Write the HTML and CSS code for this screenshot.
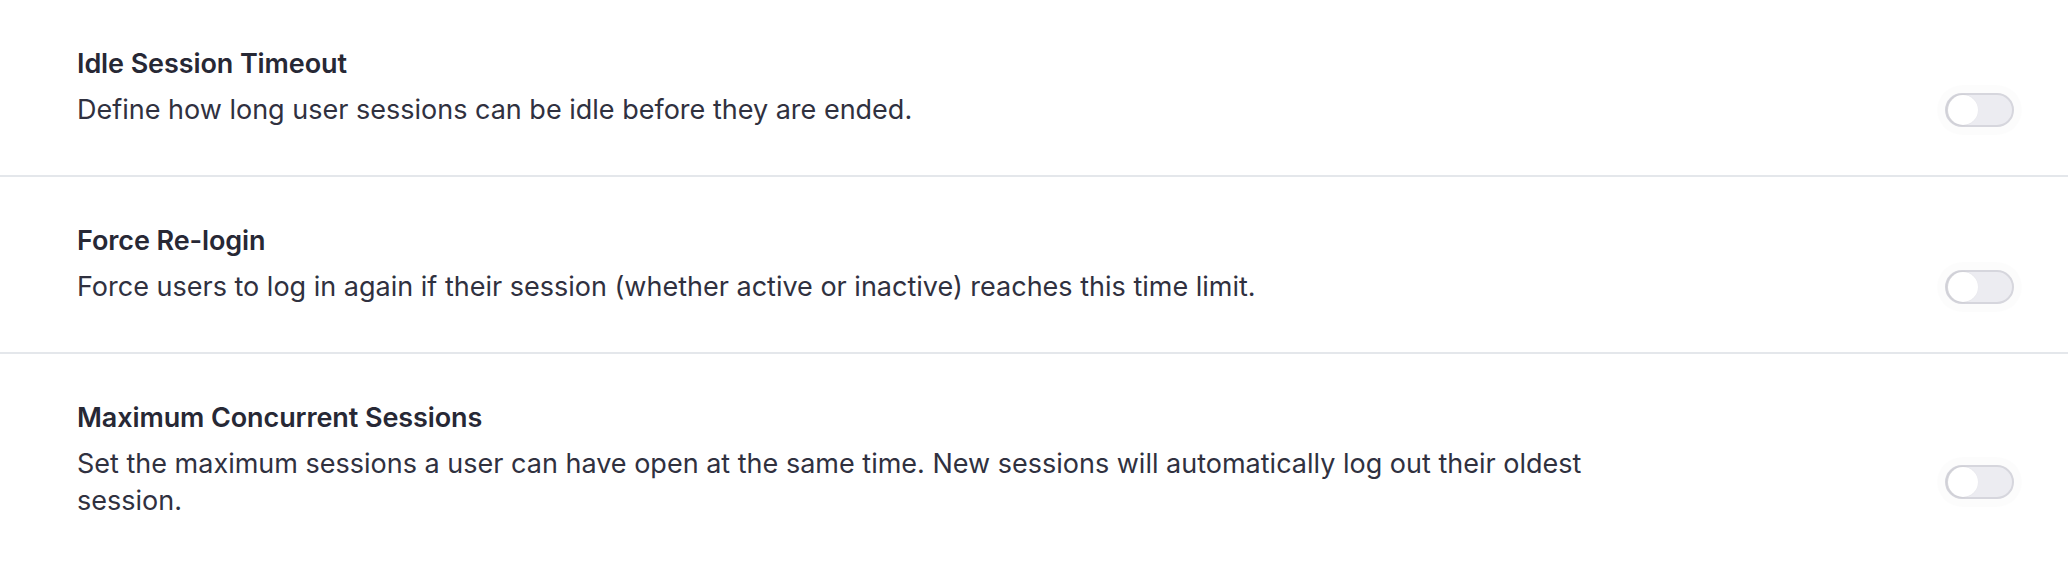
FILE: index.html
```html
<!DOCTYPE html>
<html lang="en">
<head>
<meta charset="utf-8">
<title>Session settings</title>
<link rel="stylesheet" href="styles.css">
</head>
<body>
<div class="settings">
  <section class="setting">
    <h3 class="setting-title">Idle Session Timeout</h3>
    <div class="setting-body">
      <p class="setting-desc">Define how long user sessions can be idle before they are ended.</p>
      <span class="toggle" role="switch" aria-checked="false"><span class="knob"></span></span>
    </div>
  </section>
  <section class="setting">
    <h3 class="setting-title">Force Re-login</h3>
    <div class="setting-body">
      <p class="setting-desc">Force users to log in again if their session (whether active or inactive) reaches this time limit.</p>
      <span class="toggle" role="switch" aria-checked="false"><span class="knob"></span></span>
    </div>
  </section>
  <section class="setting">
    <h3 class="setting-title">Maximum Concurrent Sessions</h3>
    <div class="setting-body">
      <p class="setting-desc">Set the maximum sessions a user can have open at the same time. New sessions will automatically log out their oldest session.</p>
      <span class="toggle" role="switch" aria-checked="false"><span class="knob"></span></span>
    </div>
  </section>
</div>
</body>
</html>
```
FILE: styles.css
```css
* { box-sizing: border-box; }
html, body { margin: 0; padding: 0; background: #ffffff; }
body {
  font-family: Inter, "Noto Sans", "Liberation Sans", sans-serif;
  color: #2a2b39;
}
.settings { display: flex; flex-direction: column; }
.setting {
  padding: 47px 54px 47px 77px;
  border-bottom: 2px solid #e4e7eb;
  display: flex;
  flex-direction: column;
  gap: 10px;
}
.setting:last-child { border-bottom: none; }
.setting-title {
  margin: 0;
  font-size: 27px;
  line-height: 34px;
  font-weight: 600;
  letter-spacing: -0.1px;
  color: #272835;
}
.setting-body {
  display: flex;
  align-items: center;
  justify-content: space-between;
}
.setting-desc {
  margin: 0;
  font-size: 27px;
  line-height: 37px;
  font-weight: 400;
  color: #30313f;
  max-width: 1600px;
}
.toggle {
  flex: none;
  width: 69px;
  height: 34px;
  border-radius: 17px;
  background: #ececf1;
  border: 2px solid #d6d6dd;
  padding: 1px;
  display: flex;
  align-items: center;
  box-shadow: 0 0 0 8px rgba(0, 0, 0, 0.012);
}
.knob {
  width: 30px;
  height: 30px;
  border-radius: 50%;
  background: #ffffff;
  box-shadow: -1px 0 2px rgba(0, 0, 0, 0.12);
}
```
